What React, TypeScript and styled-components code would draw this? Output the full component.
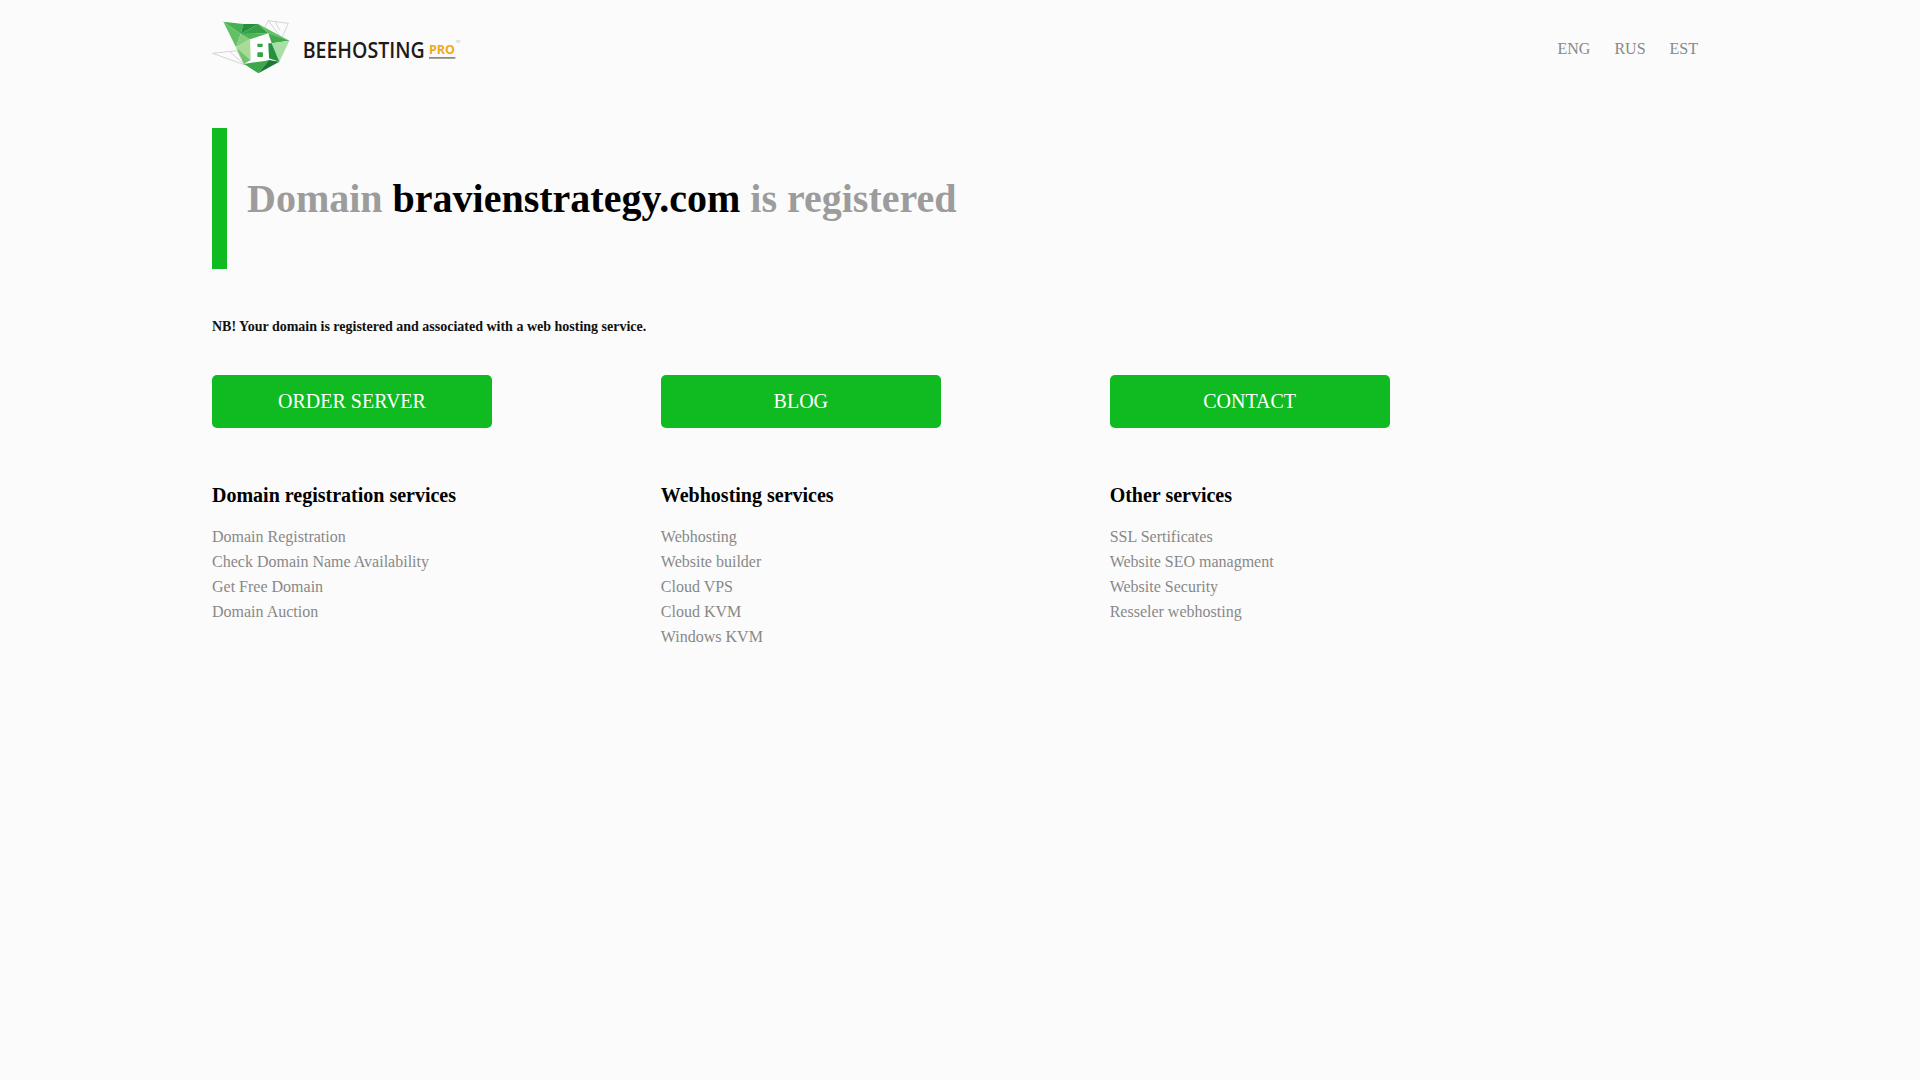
import React from "react";
import styled, { createGlobalStyle } from "styled-components";

const Global = createGlobalStyle`
  html, body { margin: 0; padding: 0; background: #fbfbfb; }
  body { font-family: "Liberation Serif", "Times New Roman", serif; font-size: 16px; color: #000; }
`;
const Page = styled.div`
  width: 1496px;
  margin: 0 0 0 212px;
  min-height: 1080px;
`;
const Header = styled.header`
  display: flex;
  justify-content: space-between;
  align-items: center;
  height: 98px;
  padding-right: 10px;
`;
const Langs = styled.nav`
  display: flex;
  gap: 24px;
`;
const Lang = styled.a`
  color: #888;
  font-size: 16px;
`;
const Banner = styled.div`
  display: flex;
  align-items: center;
  height: 141px;
  margin-top: 30px;
  padding-left: 20px;
  border-left: 15px solid #0fbb21;
`;
const Title = styled.h1`
  margin: 0;
  font-size: 40px;
  font-weight: 700;
  color: #9c9c9c;
`;
const Strong = styled.span`
  color: #000;
`;
const Note = styled.p`
  margin: 50px 0 0;
  font-size: 14px;
  line-height: 16px;
  font-weight: 700;
  color: #111;
`;
const Columns = styled.div`
  display: grid;
  grid-template-columns: repeat(3, 448.83px);
  margin-top: 40px;
`;
const Column = styled.section``;
const Button = styled.a`
  display: flex;
  align-items: center;
  justify-content: center;
  width: 280px;
  height: 53px;
  border-radius: 5px;
  background: #0fbb21;
  color: #fff;
  font-size: 20px;
`;
const ColumnTitle = styled.h3`
  margin: 56px 0 0;
  font-size: 20px;
  line-height: 23px;
  font-weight: 700;
  color: #000;
`;
const Links = styled.ul`
  list-style: none;
  margin: 17px 0 0;
  padding: 0;
`;
const LinkItem = styled.li`
  color: #888;
  font-size: 16px;
  line-height: 25px;
`;

const columns = [
  { button: "ORDER SERVER", title: "Domain registration services", links: ["Domain Registration", "Check Domain Name Availability", "Get Free Domain", "Domain Auction"] },
  { button: "BLOG", title: "Webhosting services", links: ["Webhosting", "Website builder", "Cloud VPS", "Cloud KVM", "Windows KVM"] },
  { button: "CONTACT", title: "Other services", links: ["SSL Sertificates", "Website SEO managment", "Website Security", "Resseler webhosting"] },
];

const facets: [string, string][] = [
  ["70,35 130,42 122,72", "#46b054"],
  ["130,42 175,42 122,72", "#23913e"],
  ["175,42 205,70 122,72", "#36a047"],
  ["175,42 268,92 205,70", "#62c065"],
  ["70,35 122,72 108,112", "#62c065"],
  ["122,72 150,88 108,112", "#86ce7c"],
  ["122,72 205,70 150,88", "#4cb556"],
  ["108,112 150,88 152,150", "#a8dc96"],
  ["108,112 152,150 132,162", "#70c46b"],
  ["205,70 268,92 215,100", "#40ab4d"],
  ["215,100 268,92 238,155", "#a9dfa6"],
  ["205,100 215,100 238,155 207,145", "#23913e"],
  ["132,162 207,150 175,190", "#3ca74b"],
  ["207,150 238,155 175,190", "#1a7a34"],
];

const Logo = () => (
  <svg width="250" height="60" viewBox="36 27 750 180" style={{ display: "block" }}>
    <g fill="none" stroke="#cdcdcd" strokeWidth="2.5">
      <path d="M190 60L205 32L265 40L245 85L268 92M205 32L245 85M190 60L245 85M225 35L240 62" />
      <path d="M38 130L110 122L135 165L38 130M90 126L135 165" />
    </g>
    {facets.map(([points, fill]) => (
      <polygon key={points} points={points} fill={fill} />
    ))}
    <path d="M153 88H188Q203 88 203 103Q203 114 194 119Q206 124 206 138Q206 154 188 154H153Z" fill="#fff" />
    <rect x="172" y="101" width="16" height="10" rx="2" fill="#3aa548" />
    <rect x="172" y="127" width="17" height="14" rx="2" fill="#3aa548" />
    <text x="308" y="145" fontFamily="Open Sans, sans-serif" fontWeight="600" fontSize="62" fill="#1f1a17" textLength="366" lengthAdjust="spacingAndGlyphs">BEEHOSTING</text>
    <text x="687" y="132" fontFamily="Open Sans, sans-serif" fontWeight="700" fontSize="38" fill="#f2a81d" textLength="78" lengthAdjust="spacingAndGlyphs">PRO</text>
    <text x="767" y="100" fontFamily="Open Sans, sans-serif" fontSize="9" fill="#b5b5b5">TM</text>
    <rect x="687" y="142" width="79" height="3.5" fill="#5a5148" />
  </svg>
);

export default function App() {
  return (
    <>
      <Global />
      <Page>
        <Header>
          <Logo />
          <Langs>
            <Lang>ENG</Lang>
            <Lang>RUS</Lang>
            <Lang>EST</Lang>
          </Langs>
        </Header>
        <Banner>
          <Title>
            Domain <Strong>bravienstrategy.com</Strong> is registered
          </Title>
        </Banner>
        <Note>NB! Your domain is registered and associated with a web hosting service.</Note>
        <Columns>
          {columns.map((c) => (
            <Column key={c.title}>
              <Button>{c.button}</Button>
              <ColumnTitle>{c.title}</ColumnTitle>
              <Links>
                {c.links.map((l) => (
                  <LinkItem key={l}>{l}</LinkItem>
                ))}
              </Links>
            </Column>
          ))}
        </Columns>
      </Page>
    </>
  );
}
